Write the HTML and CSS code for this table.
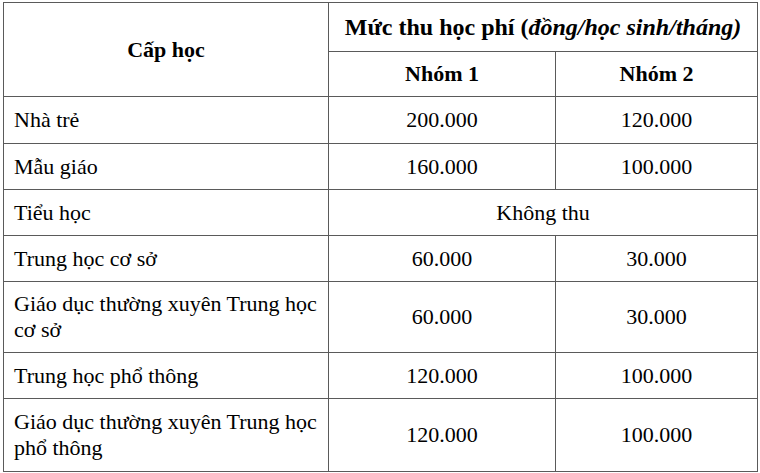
FILE: index.html
```html
<!DOCTYPE html>
<html lang="vi">
<head>
<meta charset="utf-8">
<link rel="stylesheet" href="styles.css">
</head>
<body>
<div class="wrap">
<table class="fees">
  <colgroup>
    <col class="c1"><col class="c2"><col class="c3">
  </colgroup>
  <thead>
    <tr class="h1">
      <th rowspan="2" class="level">Cấp học</th>
      <th colspan="2" class="title">Mức thu học phí (<em>đồng/học sinh/tháng)</em></th>
    </tr>
    <tr class="h2">
      <th>Nhóm 1</th>
      <th>Nhóm 2</th>
    </tr>
  </thead>
  <tbody>
    <tr class="r47"><td class="name">Nhà trẻ</td><td>200.000</td><td>120.000</td></tr>
    <tr class="r46"><td class="name">Mẫu giáo</td><td>160.000</td><td>100.000</td></tr>
    <tr class="r46"><td class="name">Tiểu học</td><td colspan="2">Không thu</td></tr>
    <tr class="r46"><td class="name">Trung học cơ sở</td><td>60.000</td><td>30.000</td></tr>
    <tr class="r71"><td class="name">Giáo dục thường xuyên Trung học cơ sở</td><td>60.000</td><td>30.000</td></tr>
    <tr class="r46"><td class="name">Trung học phổ thông</td><td>120.000</td><td>100.000</td></tr>
    <tr class="r73"><td class="name">Giáo dục thường xuyên Trung học phổ thông</td><td>120.000</td><td>100.000</td></tr>
  </tbody>
</table>
</div>
</body>
</html>
```

FILE: styles.css
```css
html, body {
  margin: 0;
  padding: 0;
  background: #ffffff;
}
.wrap {
  padding: 2px 0 0 3px;
}
.fees {
  border-collapse: collapse;
  table-layout: fixed;
  width: 754px;
  font-family: "Liberation Serif", "Times New Roman", serif;
  font-size: 22px;
  color: #000;
}
.c1 { width: 325px; }
.c2 { width: 227px; }
.c3 { width: 202px; }
.fees th, .fees td {
  border: 1px solid #5a5a5a;
  padding: 0 10px;
  text-align: center;
  vertical-align: middle;
  line-height: 26px;
}
.fees th {
  font-weight: bold;
}
.fees th.title {
  padding: 0 4px;
  font-size: 24px;
}
.fees th em {
  font-style: italic;
}
.fees td.name {
  text-align: left;
}
.h1 { height: 49px; }
.h2 { height: 45px; }
.r47 { height: 47px; }
.r46 { height: 46px; }
.r71 { height: 71px; }
.r73 { height: 73px; }
```
